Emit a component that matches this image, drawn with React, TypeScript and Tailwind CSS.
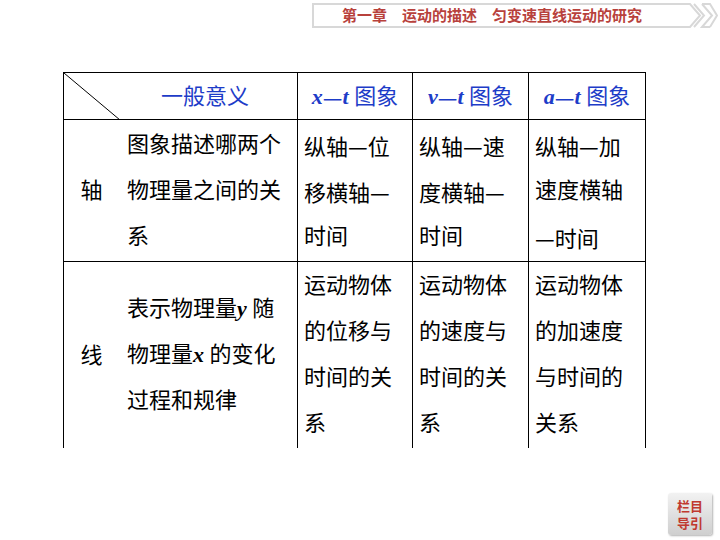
const font = { fontFamily: '"Liberation Serif","Noto Sans CJK SC",serif' };
const cjk = { fontFamily: '"Noto Sans CJK SC",sans-serif' };

function Cell({ lines, className = '' }: { lines: React.ReactNode[]; className?: string }) {
  return (
    <div className={'flex flex-col justify-center px-[6px] ' + className}>
      {lines.map((l, i) => (
        <div key={i} className="h-[46px] leading-[46px] whitespace-nowrap">{l}</div>
      ))}
    </div>
  );
}

const I = ({ c }: { c: string }) => <i className="font-bold">{c}</i>;
const D = () => <span style={cjk}>—</span>;

export default function App() {
  return (
    <div className="relative w-[720px] h-[540px] bg-white text-[22px] text-black" style={font}>
      {/* banner */}
      <div className="flex justify-end pt-[3px] pr-[30px]">
        <div className="relative w-[378px] h-[25px] border-2 border-[#d8d8d8] border-r-0 flex items-center justify-center text-[15px] font-bold text-[#b8413c]" style={cjk}>
          <span className="-ml-[20px]">第一章　运动的描述　匀变速直线运动的研究</span>
          <svg className="absolute -right-[28px] -top-[2px]" width="36" height="25" viewBox="0 0 36 25" fill="none" stroke="#d8d8d8" strokeWidth="2">
            <path d="M0 1 L8 1 L18 12.5 L8 24 L0 24" />
            <path d="M12 1 L22 12.5 L12 24 M20 1 L30 12.5 L20 24 L28 24 M20 1 L28 1 L35 12.5 L28 24" />
          </svg>
        </div>
      </div>

      {/* table */}
      <div className="ml-[63px] mt-[44px] w-[583px] border-l border-r border-t border-black">
        <div className="flex h-[47px] border-b border-black text-[#1d3cc8]">
          <div className="relative w-[234px] border-r border-black flex items-center">
            <svg className="absolute left-0 top-0" width="56" height="47"><line x1="0" y1="0" x2="56" y2="47" stroke="black" strokeWidth="1" /></svg>
            <span className="ml-[97px]">一般意义</span>
          </div>
          <div className="w-[115px] border-r border-black flex items-center justify-center"><I c="x" /><D /><I c="t" />&nbsp;图象</div>
          <div className="w-[116px] border-r border-black flex items-center justify-center"><I c="v" /><D /><I c="t" />&nbsp;图象</div>
          <div className="flex-1 flex items-center justify-center"><I c="a" /><D /><I c="t" />&nbsp;图象</div>
        </div>
        <div className="flex h-[142px] border-b border-black">
          <div className="w-[55px] flex items-center justify-center">轴</div>
          <Cell className="w-[179px] border-r border-black pl-[8px]" lines={['图象描述哪两个', '物理量之间的关', '系']} />
          <Cell className="w-[115px] border-r border-black" lines={[<>纵轴<D />位</>, <>移横轴<D /></>, '时间']} />
          <Cell className="w-[116px] border-r border-black" lines={[<>纵轴<D />速</>, <>度横轴<D /></>, '时间']} />
          <Cell className="flex-1" lines={[<>纵轴<D />加</>, '速度横轴', <><D />时间</>]} />
        </div>
        <div className="flex h-[186px]">
          <div className="w-[55px] flex items-center justify-center">线</div>
          <Cell className="w-[179px] border-r border-black pl-[8px]" lines={[<>表示物理量<I c="y" />&nbsp;随</>, <>物理量<I c="x" />&nbsp;的变化</>, '过程和规律']} />
          <Cell className="w-[115px] border-r border-black" lines={['运动物体', '的位移与', '时间的关', '系']} />
          <Cell className="w-[116px] border-r border-black" lines={['运动物体', '的速度与', '时间的关', '系']} />
          <Cell className="flex-1" lines={['运动物体', '的加速度', '与时间的', '关系']} />
        </div>
      </div>

      <div className="absolute left-[668px] top-[493px] w-[44px] h-[42px] rounded-[3px] bg-gradient-to-b from-[#f2f2f2] to-[#cfcfcf] shadow-[1px_1px_2px_rgba(0,0,0,0.3)] flex flex-col items-center justify-center text-[13px] leading-[17px] font-bold text-[#c0392f]" style={cjk}>
        <span>栏目</span><span>导引</span>
      </div>
    </div>
  );
}
